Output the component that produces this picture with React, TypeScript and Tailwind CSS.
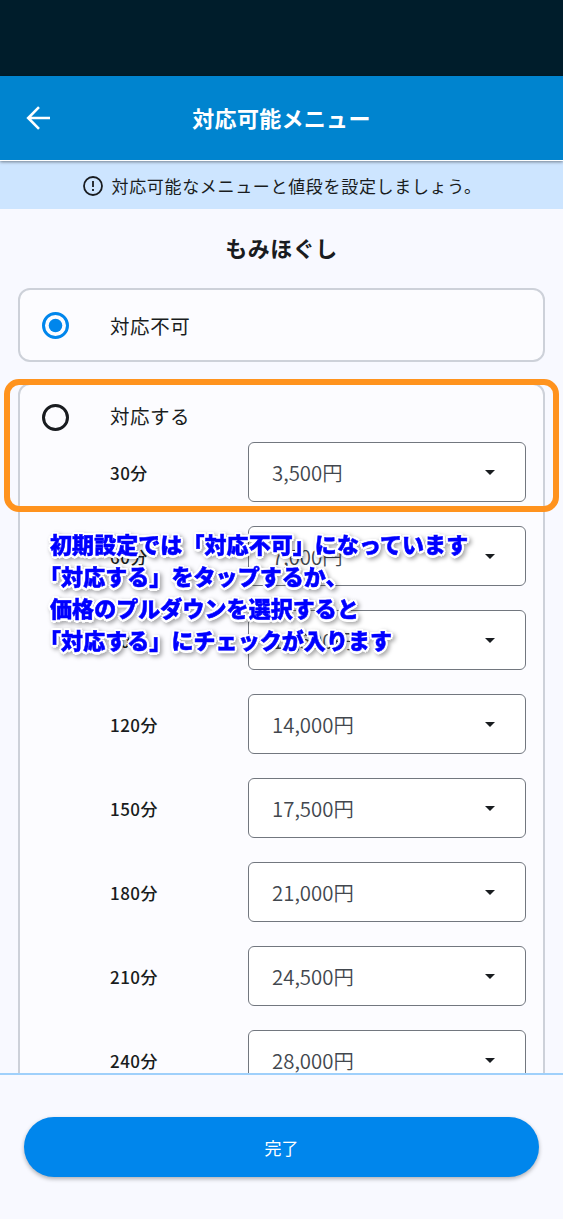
type Row = { minutes: number; price: string };

const rows: Row[] = [
  { minutes: 30, price: "3,500円" },
  { minutes: 60, price: "7,000円" },
  { minutes: 90, price: "10,500円" },
  { minutes: 120, price: "14,000円" },
  { minutes: 150, price: "17,500円" },
  { minutes: 180, price: "21,000円" },
  { minutes: 210, price: "24,500円" },
  { minutes: 240, price: "28,000円" },
];

function Radio({ checked }: { checked: boolean }) {
  return checked ? (
    <span className="flex size-[27px] shrink-0 items-center justify-center rounded-full border-[3px] border-[#0086ec]">
      <svg width="15" height="15" viewBox="0 0 15 15" fill="#0086ec">
        <circle cx="7.5" cy="7.5" r="6.8" />
      </svg>
    </span>
  ) : (
    <span className="size-[27px] shrink-0 rounded-full border-[3px] border-[#191c20]" />
  );
}

function PriceRow({ minutes, price }: Row) {
  return (
    <div className="flex h-[60px] shrink-0 items-center">
      <span className="w-[138px] pt-[2px] text-[17px] font-medium tracking-[0.45px]">{minutes}分</span>
      <button className="flex h-[60px] w-[278px] items-center justify-between rounded-[6px] border border-[#72777f] bg-white pr-[30px] pl-[23px] text-[20.4px] font-[350] text-[#42474e]">
        <span className="pt-px">{price}</span>
        <svg width="10" height="5" viewBox="0 0 10 5" fill="#191c20">
          <path d="M0 0h10L5 5z" />
        </svg>
      </button>
    </div>
  );
}

export default function App() {
  return (
    <div className="relative flex h-[1219px] w-[563px] flex-col overflow-hidden bg-[#f8f9ff] font-['Noto_Sans_CJK_JP',sans-serif] text-[#191c20]">
      <div className="h-[76px] shrink-0 bg-[#001d2b]" />
      <header className="z-10 flex h-[85px] shrink-0 items-center border-b border-white bg-[#0084cf] pl-[26px] text-white shadow-[0_1px_3px_rgba(0,0,0,0.45)]">
        <svg width="25" height="25" viewBox="0 0 25 25" fill="none" stroke="currentColor" strokeWidth="2.6">
          <path d="M24 12H2.2M13 1.2 2.2 12 13 22.8" />
        </svg>
        <h1 className="flex-1 pr-[51px] pb-[2px] text-center text-[22px] font-bold tracking-[0.3px]">対応可能メニュー</h1>
      </header>
      <div className="flex h-12 shrink-0 items-center bg-[#cde5ff] pl-[83px]">
        <svg width="20" height="21" viewBox="0 0 20 21" fill="none" stroke="currentColor" strokeWidth="1.8">
          <circle cx="10" cy="11" r="9" />
          <path d="M10 6v6M10 14v2" />
        </svg>
        <p className="ml-[8.5px] pt-[2px] text-[17px] leading-6 tracking-[0.67px] whitespace-nowrap">対応可能なメニューと値段を設定しましょう。</p>
      </div>
      <main className="flex min-h-0 flex-1 flex-col overflow-hidden px-[18px]">
        <h2 className="mt-[22px] h-8 shrink-0 text-center text-[22px] leading-8 font-bold tracking-[0.5px]">もみほぐし</h2>
        <div className="mt-[25px] flex h-[74px] shrink-0 items-center rounded-[12px] border-2 border-[#cdd1d9] bg-[#fcfcff] pl-[22px]">
          <Radio checked />
          <span className="ml-[41px] pt-[2px] text-[19.5px] tracking-[0.6px]">対応不可</span>
        </div>
        <div className="mt-[21px] flex h-[760px] shrink-0 flex-col rounded-[12px] border-2 border-[#cdd1d9] bg-[#fcfcff] pt-[18px] pl-[22px]">
          <div className="flex h-[28px] shrink-0 items-center">
            <Radio checked={false} />
            <span className="ml-[41px] pb-[2px] text-[19.5px] tracking-[0.5px]">対応する</span>
          </div>
          <div className="mt-[11px] flex flex-col gap-6 pl-[68px]">
            {rows.map((row) => (
              <PriceRow key={row.minutes} {...row} />
            ))}
          </div>
        </div>
      </main>
      <footer className="h-[146px] shrink-0 border-t-2 border-[#9fd0fb] bg-[#f8f9ff] px-6 pt-[42px]">
        <button className="flex h-[60px] w-[515px] items-center justify-center rounded-full bg-[#0086ec] pt-[2px] text-[17px] text-white shadow-[0_2px_4px_rgba(0,0,0,0.3)]">
          完了
        </button>
      </footer>
      <div className="absolute top-[379px] left-[4px] h-[133px] w-[555px] rounded-[15px] border-[6px] border-[#ff931e]" />
      <p className="absolute top-[527px] left-[50px] text-[22px] leading-[32px] font-black tracking-[0.07px] whitespace-nowrap text-[#0000ff] drop-shadow-[2px_2px_2px_rgba(0,0,0,0.35)] [-webkit-text-stroke:0.5px_#00f] [text-shadow:2.5px_0_#fff,-2.5px_0_#fff,0_2.5px_#fff,0_-2.5px_#fff,1.8px_1.8px_#fff,-1.8px_1.8px_#fff,1.8px_-1.8px_#fff,-1.8px_-1.8px_#fff]">
        <span className="block">初期設定では「対応不可」になっています</span>
        <span className="-ml-[11px] block">「対応する」をタップするか、</span>
        <span className="block">価格のプルダウンを選択すると</span>
        <span className="-ml-[11px] block">「対応する」にチェックが入ります</span>
      </p>
    </div>
  );
}
